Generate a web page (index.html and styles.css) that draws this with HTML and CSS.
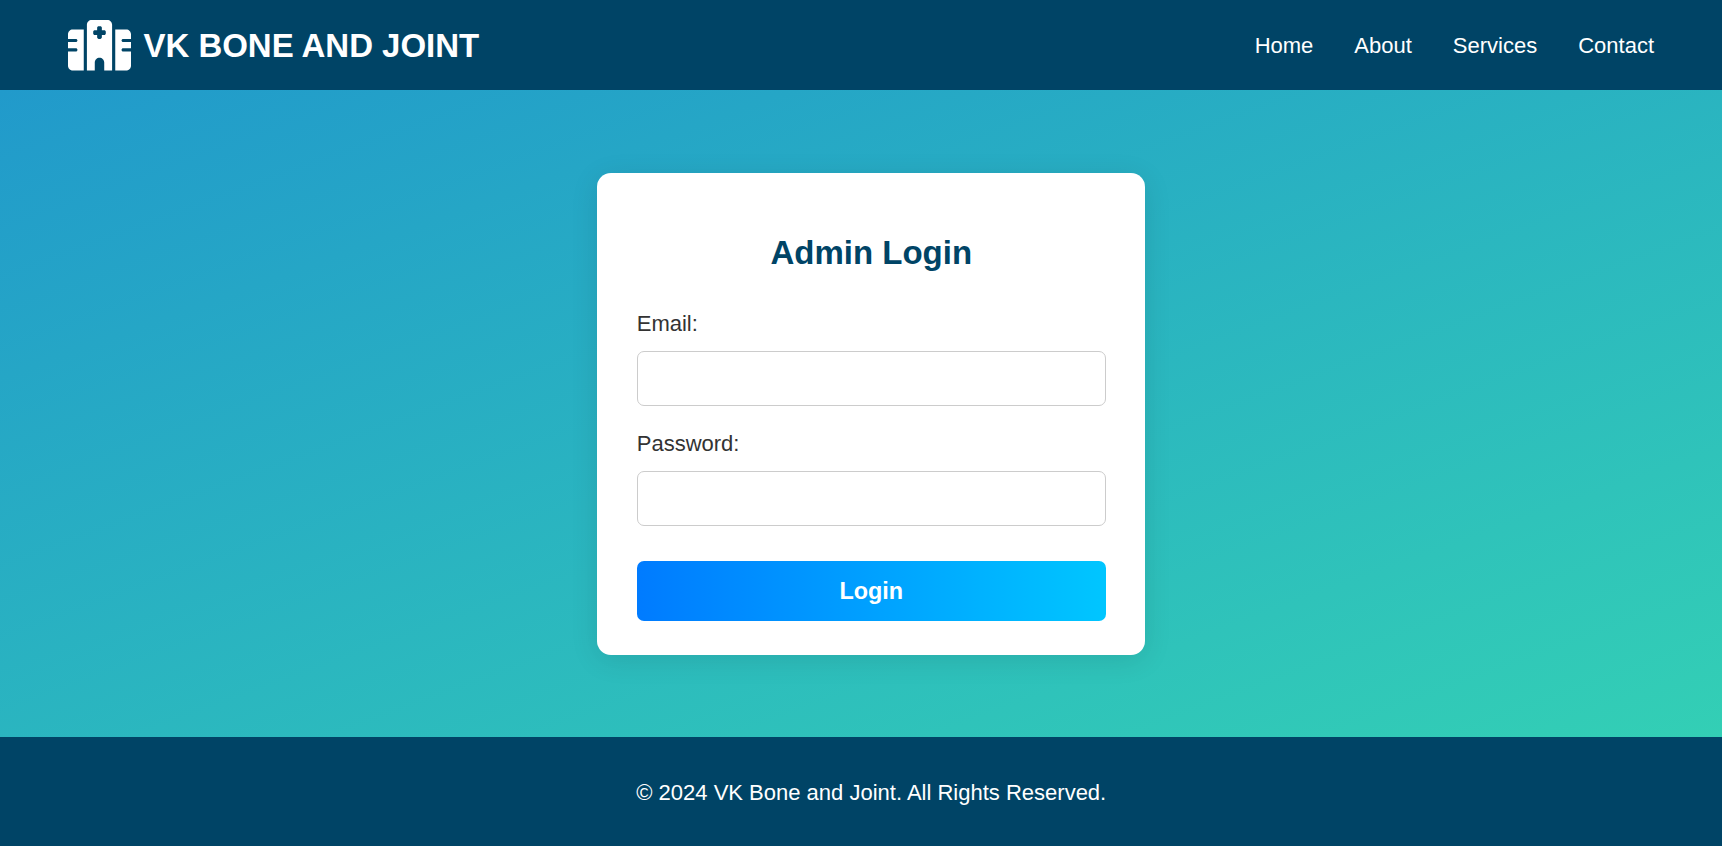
FILE: index.html
```html
<!DOCTYPE html>
<html lang="en">
<head>
<meta charset="utf-8">
<title>VK Bone and Joint - Admin Login</title>
<link rel="stylesheet" href="styles.css">
</head>
<body>
<header class="header">
  <div class="logo">
    <svg class="logo-icon" viewBox="0 0 640 512" fill="currentColor" aria-hidden="true"><path d="M192 48c0-26.500 21.500-48 48-48H400c26.500 0 48 21.500 48 48V512H368V432c0-26.500-21.500-48-48-48s-48 21.500-48 48v80H192V48zM48 96H160V512H48c-26.500 0-48-21.500-48-48V320H80c8.800 0 16-7.200 16-16s-7.200-16-16-16H0V224H80c8.800 0 16-7.200 16-16s-7.200-16-16-16H0V144c0-26.500 21.500-48 48-48zm544 0c26.500 0 48 21.500 48 48v48H560c-8.800 0-16 7.200-16 16s7.200 16 16 16h80v64H560c-8.800 0-16 7.200-16 16s7.200 16 16 16h80V464c0 26.500-21.500 48-48 48H480V96H592zM312 64c-8.800 0-16 7.200-16 16v24H272c-8.800 0-16 7.200-16 16v16c0 8.800 7.200 16 16 16h24v24c0 8.800 7.200 16 16 16h16c8.800 0 16-7.200 16-16V152h24c8.800 0 16-7.200 16-16V120c0-8.800-7.200-16-16-16H344V80c0-8.800-7.200-16-16-16H312z"/></svg>
    <h1 class="logo-text">VK BONE AND JOINT</h1>
  </div>
  <nav class="nav">
    <a href="#">Home</a>
    <a href="#">About</a>
    <a href="#">Services</a>
    <a href="#">Contact</a>
  </nav>
</header>
<main class="main">
  <form class="card">
    <h2 class="card-title">Admin Login</h2>
    <label class="label" for="email">Email:</label>
    <input class="input" type="email" id="email">
    <label class="label" for="password">Password:</label>
    <input class="input" type="password" id="password">
    <button class="button" type="button">Login</button>
  </form>
</main>
<footer class="footer">
  <p class="copyright">© 2024 VK Bone and Joint. All Rights Reserved.</p>
</footer>
</body>
</html>
```
FILE: styles.css
```css
* {
  box-sizing: border-box;
}

body {
  margin: 0;
  height: 846px;
  display: flex;
  flex-direction: column;
  overflow: hidden;
  font-family: "Liberation Sans", Arial, sans-serif;
  font-size: 22px;
  color: #333;
}

.header {
  height: 90.3px;
  flex: none;
  display: flex;
  align-items: center;
  justify-content: space-between;
  padding: 1px 68px 0;
  background: #004466;
  color: #fff;
}

.logo {
  display: flex;
  align-items: center;
  gap: 12.5px;
}

.logo-icon {
  width: 63px;
  height: 50.4px;
}

.logo-text {
  margin: 0;
  padding-top: 1px;
  font-size: 33px;
  line-height: 38px;
  letter-spacing: -0.03px;
}

.nav {
  display: flex;
  gap: 41px;
  padding-top: 1px;
}

.nav a {
  color: #fff;
  text-decoration: none;
}

.main {
  flex: 1;
  display: flex;
  align-items: center;
  justify-content: center;
  padding: 1px 0 0 20.5px;
  background: linear-gradient(160deg, #219acb, #33cfb5);
}

.card {
  width: 548px;
  height: 482px;
  display: flex;
  flex-direction: column;
  padding: 61px 39.5px 0;
  background: #fff;
  border-radius: 14px;
  box-shadow: 0 5px 28px rgba(0, 0, 0, 0.1);
}

.card-title {
  margin: 0 0 39px;
  font-size: 33px;
  line-height: 38px;
  text-align: center;
  color: #004466;
}

.label {
  line-height: 25px;
  margin-bottom: 15px;
}

.input {
  width: 100%;
  height: 55px;
  flex: none;
  margin: 0 0 25px;
  padding: 14px;
  border: 1px solid #ccc;
  border-radius: 7px;
  background: #fff;
}

.button {
  height: 59.5px;
  flex: none;
  margin-top: 10.5px;
  padding: 0;
  border: 0;
  border-radius: 7px;
  background: linear-gradient(90deg, #007bff, #00c6ff);
  color: #fff;
  font: bold 23.4px "Liberation Sans", Arial, sans-serif;
}

.footer {
  height: 109.5px;
  flex: none;
  display: flex;
  align-items: center;
  justify-content: center;
  padding: 3px 0 0 20.5px;
  background: #004466;
  color: #fff;
}

.copyright {
  margin: 0;
}
```
